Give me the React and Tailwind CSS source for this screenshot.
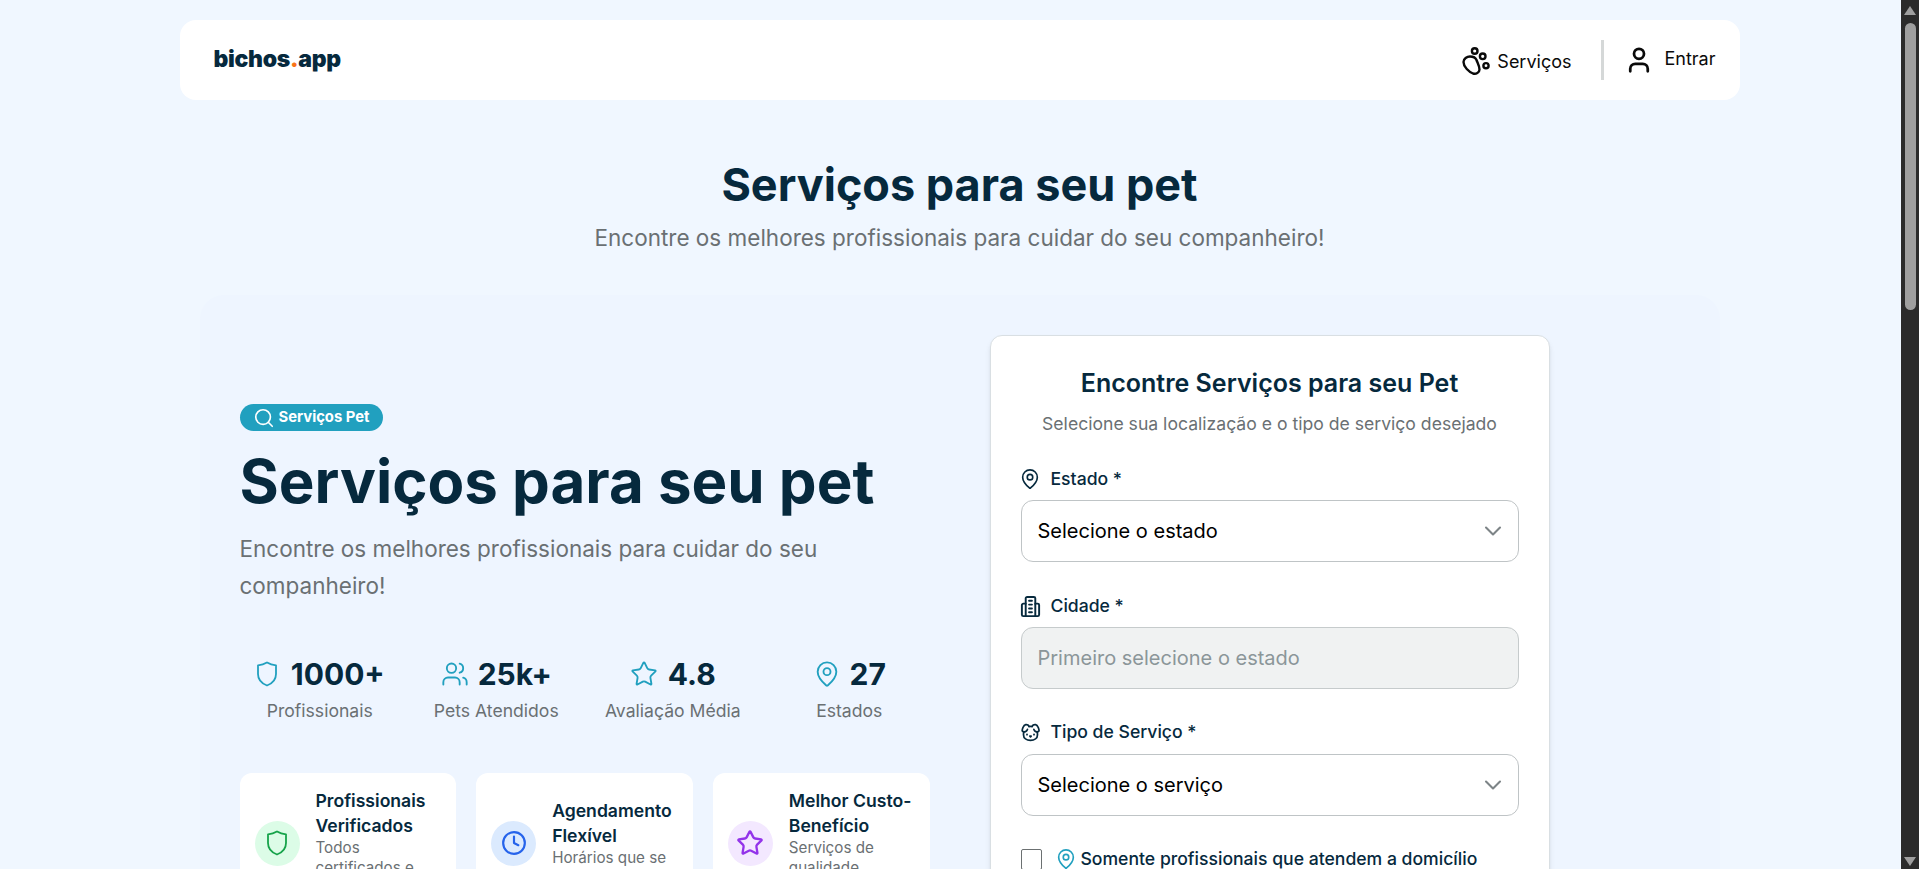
import React from "react";
import { Search, Users, Star, MapPin, Clock, ChevronDown, User, Dog } from "lucide-react";

const Paw = () => (
  <svg width="30" height="30" viewBox="0 0 30 30" fill="none" stroke="#0a0a0a" strokeWidth="2.4" className="shrink-0">
    <path d="M3.500 17C3.500 13.500 7 11.500 10 11.500C13 11.500 15.500 12.500 16.500 15C17.500 18 19.500 21 19.500 24.500C19.500 27.500 16 29.500 13 28.500C9 27 3.500 22 3.500 17Z" />
    <circle cx="14.7" cy="6" r="2.8" />
    <circle cx="22.7" cy="11.3" r="2.8" />
    <circle cx="26" cy="20.7" r="2.6" />
  </svg>
);

const Building = () => (
  <svg width="23" height="23" viewBox="0 0 24 24" fill="none" stroke="#06293d" strokeWidth="2" strokeLinejoin="round" strokeLinecap="round" className="shrink-0 -ml-[2px]">
    <path d="M7 22V3.500C7 2.700 7.700 2 8.500 2h7c.8 0 1.500.7 1.500 1.500V22" />
    <path d="M7 9H4.500C3.700 9 3 9.700 3 10.500V20.500C3 21.300 3.700 22 4.500 22h15c.8 0 1.500-.7 1.500-1.500V10.500C21 9.700 20.300 9 19.500 9H17" />
    <path d="M10.500 6h3M10.500 10h3M10.500 14h3M10.500 18h3" />
  </svg>
);

const ShieldIcon = ({ className }) => (
  <svg width="24" height="28" viewBox="0 0 24 28" fill="none" stroke="currentColor" strokeWidth="1.800" strokeLinejoin="round" className={className}>
    <path d="M12 2.500C14.500 4 17.500 5 21 5.300V14C21 20 16.500 23.800 12 25.500C7.500 23.800 3 20 3 14V5.300C6.500 5 9.500 4 12 2.500Z" />
  </svg>
);

const Stat = ({ icon, value, label, gap }) => (
  <div className="flex flex-col items-center">
    <div className={`flex items-center h-9 ${gap}`}>
      {icon}
      <span className="text-[30px] leading-9 font-bold text-[#06293d]">{value}</span>
    </div>
    <span className="mt-[7px] text-[17.6px] leading-6 text-[#6a7073]">{label}</span>
  </div>
);

const Feature = ({ circle, icon, title, desc }) => (
  <div className="flex-1 min-w-0 flex items-center gap-4 bg-white rounded-xl px-[15px] py-4">
    <div className={`w-[45px] h-[45px] rounded-full flex items-center justify-center shrink-0 ${circle}`}>{icon}</div>
    <div className="min-w-0">
      <div className="text-[17.6px] leading-[24.64px] font-semibold text-[#06293d]">{title}</div>
      <div className="text-[15.2px] leading-[19.76px] text-[#6a7073]">{desc}</div>
    </div>
  </div>
);

const FieldLabel = ({ icon, text, gap }) => (
  <div className={`flex items-center h-6 text-[17.6px] font-medium text-[#06293d] ${gap}`}>
    {icon}
    <span>{text}</span>
  </div>
);

const SelectBox = ({ text, top }) => (
  <div className={`h-[62px] flex items-center justify-between pl-4 pr-[11px] bg-white border border-[#bfc4c6] rounded-xl ${top}`}>
    <span className="text-[20px] text-black">{text}</span>
    <ChevronDown size={28} strokeWidth={1.800} className="text-[#7d8487]" />
  </div>
);

export default function App() {
  return (
    <div className="relative h-[869px] overflow-hidden bg-[#f0f7ff] font-['Inter',sans-serif]">
      <header className="mx-auto mt-5 w-[1560px] h-20 bg-white rounded-2xl flex items-center justify-between pl-[34px] pr-[24px]">
        <div className="-mt-[2px] text-[23px] leading-none font-black tracking-[-0.3px] text-[#06293d]">
          bichos<span className="text-[#f97316]">.</span>app
        </div>
        <nav className="flex items-center h-10">
          <div className="flex items-center gap-[7px] text-[18px] text-[#0a0a0a]">
            <Paw />
            <span className="mt-[3px]">Serviços</span>
          </div>
          <div className="ml-[30px] mr-5 w-[3px] h-10 bg-[#d5d8d8]" />
          <div className="flex items-center gap-[10px] text-[18px] text-[#0a0a0a]">
            <User size={30} strokeWidth={2.200} />
            <span className="-mt-[4px]">Entrar</span>
          </div>
        </nav>
      </header>

      <div className="text-center mt-[55px]">
        <h1 className="text-[45px] leading-[60px] font-bold text-[#06293d]">Serviços para seu pet</h1>
        <p className="mt-[8px] text-[22.5px] leading-[30px] text-[#6a7073]">Encontre os melhores profissionais para cuidar do seu companheiro!</p>
      </div>

      <section className="mx-auto mt-[42px] w-[1520px] bg-[#eef5ff] rounded-3xl pt-10 pl-10 flex gap-[60px] items-start h-[700px]">
        <div className="w-[690px] shrink-0 pt-[69px]">
          <div className="inline-flex items-center gap-1 h-[27px] pl-[13px] pr-[14px] rounded-full bg-[#21a0bf] text-white text-[14.8px] font-bold align-top">
            <Search size={22} strokeWidth={1.800} />
            <span>Serviços Pet</span>
          </div>
          <h2 className="mt-[12px] text-6xl leading-[77px] font-bold text-[#06293d]">Serviços para seu pet</h2>
          <p className="mt-[10px] text-[22.5px] leading-[37px] text-[#6a7073]">Encontre os melhores profissionais para cuidar do seu companheiro!</p>
          <div className="mt-[52px] grid grid-cols-4 gap-4">
            <Stat gap="gap-3" icon={<ShieldIcon className="text-[#21a0bf]" />} value="1000+" label="Profissionais" />
            <Stat gap="gap-[9px]" icon={<Users size={28} strokeWidth={1.600} className="text-[#21a0bf]" />} value="25k+" label="Pets Atendidos" />
            <Stat gap="gap-[10px]" icon={<Star size={28} strokeWidth={1.600} className="text-[#21a0bf]" />} value="4.8" label="Avaliação Média" />
            <Stat gap="gap-[9px]" icon={<MapPin size={28} strokeWidth={1.600} className="text-[#21a0bf]" />} value="27" label="Estados" />
          </div>
          <div className="mt-[50px] flex gap-5">
            <Feature circle="bg-[#dcfce7]" icon={<ShieldIcon className="text-[#16a34a]" />} title="Profissionais Verificados" desc="Todos certificados e avaliados" />
            <Feature circle="bg-[#dbeafe]" icon={<Clock size={26} strokeWidth={2} className="text-[#2563eb]" />} title="Agendamento Flexível" desc="Horários que se adaptam" />
            <Feature circle="bg-[#f3e8ff]" icon={<Star size={28} strokeWidth={2} className="text-[#9333ea]" />} title="Melhor Custo-Benefício" desc="Serviços de qualidade garantida" />
          </div>
        </div>

        <div className="w-[560px] shrink-0 bg-white border border-[#d9dfe3] rounded-xl shadow-md px-[30px] pt-[31px] pb-8">
          <h3 className="text-center text-[25px] leading-8 font-semibold text-[#06293d]">Encontre Serviços para seu Pet</h3>
          <p className="mt-[13px] text-center text-[17.6px] leading-6 text-[#6a7073]">Selecione sua localização e o tipo de serviço desejado</p>
          <div className="mt-[31px]">
            <FieldLabel gap="gap-[10px]" icon={<MapPin size={22} strokeWidth={1.800} className="shrink-0 -ml-[2px]" />} text="Estado *" />
            <SelectBox top="mt-[9px]" text="Selecione o estado" />
          </div>
          <div className="mt-8">
            <FieldLabel gap="gap-[9px]" icon={<Building />} text="Cidade *" />
            <div className="mt-[9px] h-[62px] flex items-center pl-4 bg-[#f0f2f2] border border-[#c6cbcc] rounded-xl">
              <span className="text-[20px] text-[#8b9699]">Primeiro selecione o estado</span>
            </div>
          </div>
          <div className="mt-[31px]">
            <FieldLabel gap="gap-[10px]" icon={<Dog size={21} strokeWidth={2} className="shrink-0 -ml-px" />} text="Tipo de Serviço *" />
            <SelectBox top="mt-[10px]" text="Selecione o serviço" />
          </div>
          <div className="mt-[30px] flex items-center">
            <div className="w-[21px] h-[21px] bg-white border border-[#6b7071] rounded-[2px] shrink-0" />
            <MapPin size={22} strokeWidth={1.800} className="ml-[13px] text-[#21a0bf] shrink-0" />
            <span className="ml-1 text-[17.6px] font-medium text-[#06293d]">Somente profissionais que atendem a domicílio</span>
          </div>
        </div>
      </section>

      <div className="absolute top-0 right-0 bottom-0 w-[18px] bg-[#2b2b2b]">
        <div className="absolute left-1/2 -translate-x-1/2 top-[6px] w-0 h-0 border-x-[6px] border-x-transparent border-b-[9px] border-b-[#9f9f9f]" />
        <div className="absolute left-[4px] right-[3px] top-[23px] h-[287px] rounded-full bg-[#9f9f9f]" />
        <div className="absolute left-1/2 -translate-x-1/2 bottom-[3px] w-0 h-0 border-x-[6px] border-x-transparent border-t-[9px] border-t-[#9f9f9f]" />
      </div>
    </div>
  );
}
